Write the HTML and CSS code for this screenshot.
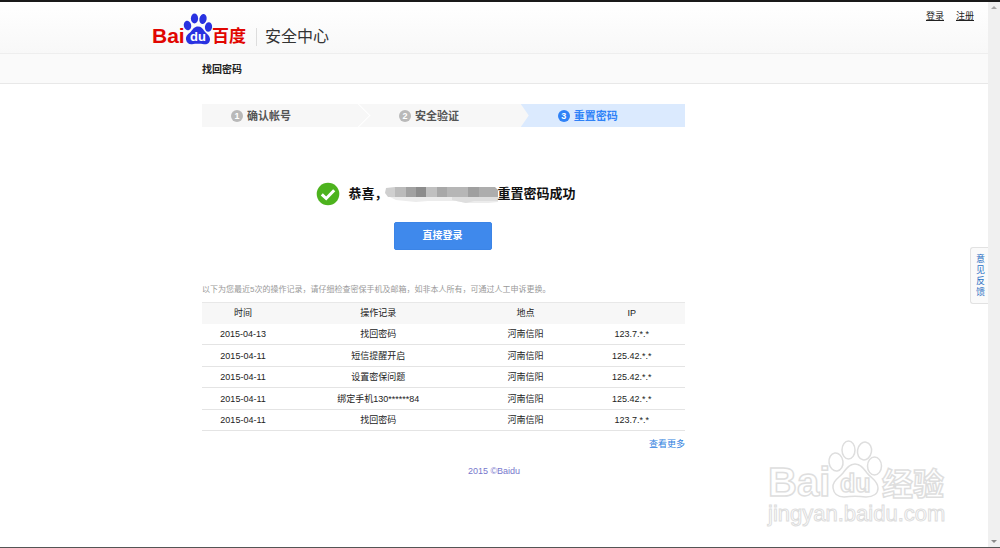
FILE: index.html
```html
<!DOCTYPE html>
<html lang="zh-CN">
<head>
<meta charset="utf-8">
<title>找回密码</title>
<link rel="stylesheet" href="styles.css">
</head>
<body>
<div class="page">
  <header class="header">
    <div class="container header-row">
      <a class="brand" href="#">
        <svg class="logo" viewBox="0 0 96 34" width="96" height="34" role="img" aria-label="Baidu 百度">
          <g fill="#e10601">
            <text x="0" y="31" class="logo-latin">Bai</text>
            <text x="60" y="30" class="logo-han">百度</text>
          </g>
          <g fill="#2932e1">
            <ellipse cx="35.500" cy="13.500" rx="3.700" ry="4.800" transform="rotate(-12 35.500 13.500)"/>
            <ellipse cx="42.500" cy="6.500" rx="3.600" ry="5"/>
            <ellipse cx="51" cy="7" rx="3.600" ry="5" transform="rotate(12 51 7)"/>
            <ellipse cx="56.500" cy="15" rx="3.600" ry="4.800" transform="rotate(8 56.500 15)"/>
            <path d="M46 14.500c-3.500 0-5 2.500-7 5-2.500 2.500-5.500 4-5 8 .5 3.500 3 5 6 4.700 4-.6 8-.6 12 0 3.500.5 6-1.500 6-5 0-3.700-3.500-5.500-5.500-8-2-2.700-3.500-4.700-6.500-4.700z"/>
          </g>
          <text x="38" y="29" class="logo-du">du</text>
        </svg>
        <span class="brand-name">安全中心</span>
      </a>
    </div>
    <nav class="account">
      <a href="#">登录</a>
      <a href="#">注册</a>
    </nav>
  </header>

  <div class="title-bar">
    <div class="container"><h1 class="title">找回密码</h1></div>
  </div>

  <main class="container main">
    <ol class="steps">
      <li class="step step-first"><span class="num">1</span>确认帐号</li>
      <li class="step step-second"><span class="num">2</span>安全验证</li>
      <li class="step step-active"><span class="num">3</span>重置密码</li>
    </ol>

    <section class="result">
      <p class="message">
        <svg class="tick" viewBox="0 0 24 24" width="24" height="24" aria-hidden="true">
          <circle cx="12" cy="12" r="11.300" fill="#4db31e"/>
          <path d="M5.800 12.300l4.400 4.200 8-8.300" fill="none" stroke="#fff" stroke-width="3"/>
        </svg>
        <span>恭喜，</span>
        <svg class="mask" viewBox="0 0 114 18" width="114" height="18" aria-hidden="true">
          <path fill="#ececec" d="M4 11h110v6l-10 1H82l-10-2H44l-12 1-20-2z"/>
          <path fill="#dedede" d="M68 11h46v5H90l-8 2-14-3z"/>
          <path fill="#cfcfcf" d="M2 3l9-1v10H4L1 8z"/>
          <path fill="#bbb" d="M11 2h11v10H11z"/>
          <path fill="#a1a1a1" d="M22 2h10v10H22z"/>
          <path fill="#8c8c8c" d="M32 2h10v10H32z"/>
          <path fill="#c0c0c0" d="M42 2h11v10H42z"/>
          <path fill="#a8a8a8" d="M53 2h10v10H53z"/>
          <path fill="#b6b6b6" d="M63 2h21v10H63z"/>
          <path fill="#9f9f9f" d="M84 2h11v10H84z"/>
          <path fill="#adadad" d="M95 2h16l3 3v7H95z"/>
        </svg>
        <span>重置密码成功</span>
      </p>
      <button class="login" type="button">直接登录</button>
    </section>

    <section class="history">
      <p class="note">以下为您最近5次的操作记录，请仔细检查密保手机及邮箱，如非本人所有，可通过人工申诉更换。</p>
      <table class="log">
        <colgroup><col class="col-time"><col class="col-action"><col class="col-place"><col class="col-ip"></colgroup>
        <thead>
          <tr><th scope="col">时间</th><th scope="col">操作记录</th><th scope="col">地点</th><th scope="col">IP</th></tr>
        </thead>
        <tbody>
          <tr><td>2015-04-13</td><td>找回密码</td><td>河南信阳</td><td>123.7.*.*</td></tr>
          <tr><td>2015-04-11</td><td>短信提醒开启</td><td>河南信阳</td><td>125.42.*.*</td></tr>
          <tr><td>2015-04-11</td><td>设置密保问题</td><td>河南信阳</td><td>125.42.*.*</td></tr>
          <tr><td>2015-04-11</td><td>绑定手机130******84</td><td>河南信阳</td><td>125.42.*.*</td></tr>
          <tr><td>2015-04-11</td><td>找回密码</td><td>河南信阳</td><td>123.7.*.*</td></tr>
        </tbody>
      </table>
      <a class="more" href="#">查看更多</a>
    </section>
  </main>

  <footer class="footer">2015 ©Baidu</footer>

  <a class="feedback" href="#">意见反馈</a>

  <svg class="watermark" viewBox="0 0 184 90" width="184" height="90" role="img" aria-label="Baidu 经验">
    <g fill="#fff" stroke="#dedede" stroke-width="1.500">
      <text x="2" y="57" class="wm-latin">Bai</text>
      <ellipse cx="70" cy="23" rx="7" ry="9" transform="rotate(-8 70 23)"/>
      <ellipse cx="82.500" cy="11" rx="6.500" ry="9"/>
      <ellipse cx="98.500" cy="12" rx="7" ry="9" transform="rotate(10 98.500 12)"/>
      <ellipse cx="108.500" cy="27" rx="7" ry="9"/>
      <path d="M89 25c-6 0-9 5-12 9-4 5-11 8-10 15 1 7 5 9 11 9 8-1 14-1 22 0 7 0 12-3 12-9 0-7-7-10-11-15-3-4-6-9-12-9z"/>
      <text x="74" y="53" class="wm-du">du</text>
      <text x="116" y="56" class="wm-han">经验</text>
    </g>
    <text x="2" y="82" class="wm-url">jingyan.baidu.com</text>
  </svg>
</div>

<div class="scroll-track" aria-hidden="true">
  <svg viewBox="0 0 12 8" width="12" height="8"><path d="M3 6l3-3 3 3z" fill="#a6a6a6"/></svg>
  <svg viewBox="0 0 12 8" width="12" height="8"><path d="M3 3h6l-3 3z" fill="#8a8a8a"/></svg>
</div>
</body>
</html>
```
FILE: styles.css
```css
* {
  box-sizing: border-box;
}

body {
  display: flex;
  min-height: 100vh;
  margin: 0;
  border-top: 2px solid #1a1a1a;
  border-bottom: 1px solid #555;
  background: #fff;
  color: #222;
  font: 9px/12px "Liberation Sans", "Noto Sans CJK SC", sans-serif;
}

a {
  color: inherit;
}

.page {
  position: relative;
  flex: 1;
  min-width: 0;
}

.container {
  max-width: 684px;
  margin: 0 auto;
}

.header {
  position: relative;
  height: 52px;
  border-bottom: 1px solid #eee;
  background: linear-gradient(#fff, #f8f8f8);
}

.header-row {
  padding-top: 10px;
}

.brand {
  display: flex;
  align-items: flex-end;
  color: #333;
  text-decoration: none;
}

.logo,
.tick,
.mask {
  display: block;
  flex: none;
}

.logo-latin {
  font: bold 21px "Liberation Sans", sans-serif;
}

.logo-han {
  font: bold 17px "Noto Sans CJK SC", sans-serif;
}

.logo-du {
  fill: #fff;
  font: bold 13px "Liberation Sans", sans-serif;
}

.brand-name {
  margin-left: 8px;
  padding-left: 8px;
  border-left: 1px solid #ddd;
  font-size: 16px;
  line-height: 18px;
}

.account {
  position: absolute;
  top: 8px;
  right: 14px;
  display: flex;
  gap: 12px;
}

.title-bar {
  height: 30px;
  border-bottom: 1px solid #e8e8e8;
  background: #fafafa;
}

.title {
  margin: 0;
  padding-left: 50px;
  font-size: 10px;
  line-height: 31px;
}

.main {
  padding: 20px 151px 0 50px;
}

.steps {
  display: flex;
  height: 23px;
  margin: 0;
  padding: 0;
  background: #f7f7f7;
  color: #555;
  font-size: 11px;
  font-weight: bold;
  list-style: none;
}

.step {
  position: relative;
  display: flex;
  align-items: center;
  gap: 4px;
}

.step-first {
  width: 35%;
  padding-left: 29px;
}

.step-second {
  width: 31%;
  padding-left: 28px;
}

.step-active {
  width: 34%;
  padding-left: 37px;
  background: #dbeafe;
  color: #2f82f7;
  clip-path: polygon(0 0, 100% 0, 100% 100%, 0 100%, 8px 50%);
}

.step-first::after {
  position: absolute;
  top: 3px;
  right: 4px;
  width: 16px;
  height: 16px;
  border: solid #fff;
  border-width: 1px 1px 0 0;
  content: "";
  transform: rotate(45deg);
}

.num {
  width: 12px;
  height: 12px;
  border-radius: 50%;
  background: #b9b9b9;
  color: #fff;
  font-size: 9px;
  text-align: center;
}

.step-active .num {
  background: #2f82f7;
}

.result {
  display: flex;
  flex-direction: column;
  align-items: center;
  gap: 16px;
  padding: 55px 2px 34px 0;
}

.message {
  display: flex;
  align-items: center;
  margin: 0;
  padding-left: 7px;
  color: #111;
  font-size: 13px;
  font-weight: bold;
  line-height: 24px;
}

.tick {
  margin-right: 8px;
}

.mask {
  margin-left: -4px;
}

.login {
  width: 98px;
  height: 28px;
  padding: 0;
  border: 1px solid #3b84e6;
  border-radius: 2px;
  background: #3f89ec;
  color: #fff;
  font: inherit;
  font-size: 10px;
  font-weight: bold;
}

.history {
  display: flex;
  flex-direction: column;
}

.note {
  margin: 0;
  padding-bottom: 6px;
  color: #999;
  font-size: 8px;
}

.log {
  width: 100%;
  border-collapse: collapse;
  table-layout: fixed;
}

.col-time {
  width: 17%;
}

.col-action {
  width: 39%;
}

.col-place {
  width: 22%;
}

.col-ip {
  width: 22%;
}

.log th,
.log td {
  height: 21px;
  padding: 0;
  border-bottom: 1px solid #e4e4e4;
  text-align: center;
}

.log th {
  border-top: 1px solid #e8e8e8;
  border-bottom: 0;
  background: #f7f7f7;
  font-weight: normal;
}

.log tr:nth-child(even) td {
  height: 22px;
}

.more {
  align-self: flex-end;
  margin-top: 7px;
  color: #2f82e0;
  text-decoration: none;
}

.footer {
  padding-top: 15px;
  color: #77c;
  text-align: center;
}

.feedback {
  position: absolute;
  top: 245px;
  right: 0;
  width: 18px;
  padding: 6px 3px 5px 5px;
  border: 1px solid #e2e2e2;
  border-right: 0;
  border-radius: 3px 0 0 3px;
  background: #fafafa;
  color: #2a6fc4;
  line-height: 11px;
  text-decoration: none;
  word-break: break-all;
}

.watermark {
  position: absolute;
  right: 38px;
  bottom: 18px;
}

.wm-latin {
  font: bold 40px "Liberation Sans", sans-serif;
}

.wm-du {
  font: bold 25px "Liberation Sans", sans-serif;
}

.wm-han {
  font: bold 31px "Noto Sans CJK SC", sans-serif;
}

.wm-url {
  fill: #fff;
  stroke: #ddd;
  font: 22px "Liberation Sans", sans-serif;
}

.scroll-track {
  display: flex;
  flex: none;
  flex-direction: column;
  justify-content: space-between;
  width: 12px;
  padding: 1px 0 2px;
  background: #f0f0f0;
}
```
